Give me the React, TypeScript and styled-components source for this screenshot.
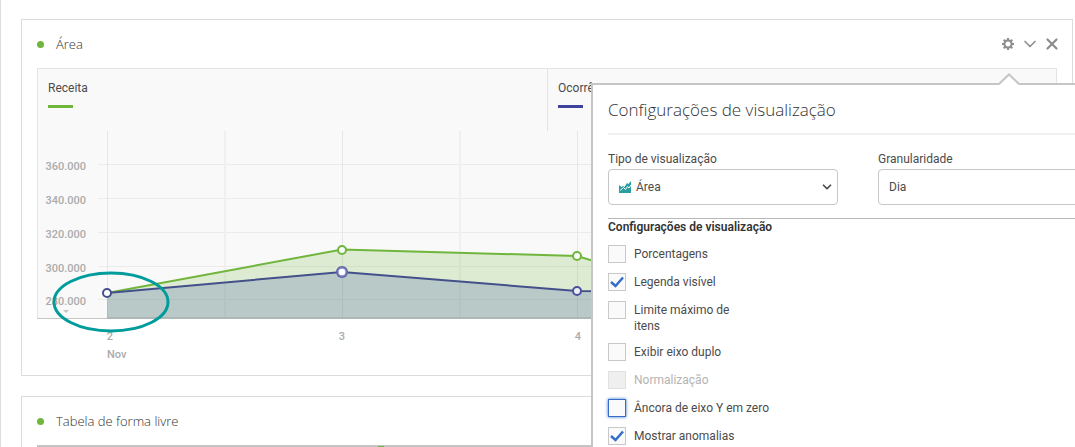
import React, { useId } from 'react';
import styled, { createGlobalStyle } from 'styled-components';
import { ChevronDown, X } from 'lucide-react';

const GlobalStyle = createGlobalStyle`
  *, *::before, *::after { box-sizing: border-box; }
  body {
    margin: 0;
    background: #fff;
    color: #4b4b4b;
    font: 400 12px/16px Roboto, "Liberation Sans", sans-serif;
  }
`;

const Page = styled.main`
  display: flex;
  flex-direction: column;
  gap: 20px;
  height: 100vh;
  overflow: hidden;
  padding: 19px 2px 0 20px;
  border-left: 1px solid #dedede;
`;

const Panel = styled.section`
  flex: none;
  border: 1px solid #dcdcdc;
  padding: 0 15px;
`;

const PanelHeader = styled.header`
  display: flex;
  align-items: center;
  gap: 12px;
  height: 48px;
`;

const Dot = styled.span`
  width: 7px;
  height: 7px;
  border-radius: 50%;
  background: #70b53c;
`;

const PanelTitle = styled.h2`
  flex: 1;
  margin: 0;
  color: #323232;
  font: 300 13px/20px "Open Sans", sans-serif;
`;

const Tools = styled.div`
  display: flex;
  align-items: center;
  gap: 8px;
  margin-right: -2px;
`;

const ToolAnchor = styled.div`
  position: relative;
  display: flex;
`;

const ToolButton = styled.button`
  display: flex;
  align-items: center;
  justify-content: center;
  width: 14px;
  height: 14px;
  padding: 0;
  border: 0;
  background: none;
  color: #8e8e8e;
  cursor: pointer;

  svg { flex: none; }
`;

const Chart = styled.div`
  border: solid #e4e4e4;
  border-width: 1px 1px 0;
  background: #f9f9f9;
  margin-bottom: 56px;
`;

const Legend = styled.div`
  display: grid;
  grid-template-columns: 1fr 1fr;
`;

const LegendItem = styled.div`
  height: 62px;
  padding: 11px 10px 0;

  & + & { border-left: 1px solid #e4e4e4; }
`;

const Swatch = styled.div<{ $color: string }>`
  width: 25px;
  height: 3px;
  margin-top: 9px;
  background: ${(p) => p.$color};
`;

const Plot = styled.svg`
  display: block;
  width: 100%;
  height: 188px;
  overflow: visible;
  font: 500 11px Roboto, sans-serif;
  fill: none;

  text { fill: #ababab; }
`;

const TableFrame = styled.div`
  height: 40px;
  border: 1px solid #c4c4c4;
  border-top-width: 2px;
  background: #f9f9f9;
`;

const TableMark = styled.div`
  position: relative;
  top: -1px;
  width: 6px;
  height: 4px;
  margin-left: 340px;
  background: #70b53c;
`;

const Popover = styled.div`
  position: absolute;
  z-index: 2;
  top: 46px;
  right: -110px;
  width: 534px;
  padding: 15px 15px 24px;
  border: 2px solid #c6c6c6;
  background: #fff;
`;

const Caret = styled.svg`
  position: absolute;
  top: -12px;
  right: 104px;
`;

const PopoverTitle = styled.h3`
  margin: 0;
  padding-bottom: 13px;
  border-bottom: 2px solid #f1f1f1;
  color: #323232;
  font: 300 17px/20px "Open Sans", sans-serif;
`;

const Fields = styled.div`
  display: grid;
  grid-template-columns: 1fr 1fr;
  gap: 40px;
  padding: 16px 0 13px;
  border-bottom: 1px solid #b9b9b9;
`;

const Field = styled.label`
  display: flex;
  flex-direction: column;
  gap: 2px;
`;

const SelectBox = styled.span`
  display: grid;
  align-items: center;

  > * { grid-area: 1 / 1; }
  > svg { pointer-events: none; }
`;

const TypeIcon = styled.svg`
  margin-left: 11px;
`;

const Arrow = styled(ChevronDown)`
  justify-self: end;
  margin-right: 4px;
  color: #4b4b4b;
`;

const Select = styled.select<{ $icon?: boolean }>`
  appearance: none;
  width: 100%;
  height: 36px;
  padding: 0 24px 0 ${(p) => (p.$icon ? 27 : 10)}px;
  border: 1px solid #c6c6c6;
  border-radius: 4px;
  background: #fff;
  color: #4b4b4b;
  font: inherit;
`;

const Options = styled.fieldset`
  display: flex;
  flex-direction: column;
  gap: 10px;
  margin: 0;
  padding: 0;
  border: 0;
`;

const OptionsTitle = styled.legend`
  padding: 0 0 10px;
  color: #323232;
  font-weight: 600;
`;

const Option = styled.label<{ $disabled?: boolean; $narrow?: boolean }>`
  display: flex;
  gap: 8px;
  width: ${(p) => (p.$narrow ? '136px' : 'auto')};
  color: ${(p) => (p.$disabled ? '#b4b4b4' : '#4b4b4b')};
`;

const CheckBox = styled.span`
  display: grid;
  flex: none;
  place-items: center;
  width: 18px;
  height: 18px;

  > * { grid-area: 1 / 1; }
  > svg { pointer-events: none; }
`;

const Check = styled.input<{ $focused?: boolean }>`
  appearance: none;
  width: 18px;
  height: 18px;
  margin: 0;
  border: 1px solid ${(p) => (p.$focused ? '#326ec8' : '#c8c8c8')};
  background: #fafafa;
  box-shadow: ${(p) => (p.$focused ? '0 0 3px #326ec8' : 'none')};

  &:disabled {
    border-color: #e1e1e1;
    background: #efefef;
  }
`;

const OptionText = styled.span`
  padding-top: 1px;
  margin-bottom: -1px;
`;

const GREEN = '#70b53c';
const NAVY = '#43508a';
const GRID_ROWS = [
  { y: 34, label: '360.000' },
  { y: 68, label: '340.000' },
  { y: 102, label: '320.000' },
  { y: 136, label: '300.000' },
  { y: 169, label: '280.000' },
];

function AreaChart() {
  return (
    <Plot role="img" aria-label="Receita e Ocorrências por dia">
      {GRID_ROWS.map((row) => (
        <React.Fragment key={row.label}>
          <rect x="60" y={row.y - 1} width="94%" height="1" fill="#ebebeb" />
          <text x="48" y={row.y + 5} textAnchor="end">{row.label}</text>
        </React.Fragment>
      ))}
      <path d="M25 179h6l-3 3z" fill="#c4c4c4" />
      {[69, 304, 539].map((x) => (
        <rect key={x} x={x} y="0" width="1" height="188" fill="#e6e6e6" />
      ))}
      {[186, 421].map((x) => (
        <rect key={x} x={x} y="0" width="2" height="188" fill="#f0f0f0" />
      ))}
      <path d="M69 162L304 118L539 125L640 155L774 140V188H69z" fill={GREEN} fillOpacity="0.2" />
      <path d="M69 162L304 141L539 160L774 162V188H69z" fill="#5a6eaa" fillOpacity="0.27" />
      <rect x="-1" y="187" width="100%" height="1" fill="#c6c6c6" />
      <path d="M69 187H774" stroke="#9ca6a6" strokeWidth="1" />
      <path d="M69 162L304 118.500L539 125L640 155" stroke={GREEN} strokeWidth="2" />
      <path d="M69 162L304 141L539 160L774 162" stroke={NAVY} strokeWidth="2" />
      <g fill="#fff" strokeWidth="2">
        <circle cx="304" cy="119" r="4" stroke={GREEN} fill="#f8fbf5" />
        <circle cx="539" cy="125" r="4" stroke={GREEN} fill="#f8fbf5" />
        <circle cx="69" cy="162" r="4" stroke={NAVY} />
        <circle cx="304" cy="141" r="6" fill="#5c5fa8" stroke="none" />
        <circle cx="304" cy="141" r="4" fill="#fff" stroke="#8a8dc6" strokeWidth="1.500" />
        <circle cx="539" cy="160" r="4" stroke="#4a50a0" fill="#eceef4" />
      </g>
      <text x="72" y="209" textAnchor="middle">2</text>
      <text x="304" y="209" textAnchor="middle">3</text>
      <text x="540" y="209" textAnchor="middle">4</text>
      <text x="69" y="227">Nov</text>
      <ellipse cx="73" cy="171" rx="57" ry="29" stroke="#009c9c" strokeWidth="3" />
    </Plot>
  );
}

function GearIcon() {
  return (
    <svg width="12" height="12" viewBox="0 0 12 12" fill="none" stroke="currentColor">
      <circle cx="6" cy="6" r="3.500" strokeWidth="2" />
      {[0, 45, 90, 135, 180, 225, 270, 315].map((a) => (
        <path key={a} d="M6 0V2.300" strokeWidth="2.200" transform={`rotate(${a} 6 6)`} />
      ))}
    </svg>
  );
}

interface ToggleProps {
  label: string;
  checked?: boolean;
  disabled?: boolean;
  focused?: boolean;
  narrow?: boolean;
}

function Toggle({ label, checked, disabled, focused, narrow }: ToggleProps) {
  const id = useId();
  return (
    <Option htmlFor={id} $disabled={disabled} $narrow={narrow}>
      <CheckBox>
        <Check id={id} type="checkbox" defaultChecked={checked} disabled={disabled} $focused={focused} />
        {checked && (
          <svg width="14" height="12" viewBox="0 0 14 12" fill="none" stroke="#326ec8" strokeWidth="2.500">
            <path d="M1 6l4.500 4L13 1.500" />
          </svg>
        )}
      </CheckBox>
      <OptionText>{label}</OptionText>
    </Option>
  );
}

function SettingsPopover() {
  return (
    <Popover role="dialog" aria-label="Configurações de visualização">
      <Caret width="20" height="12" viewBox="0 0 20 12">
        <path d="M0 12L10 2L20 12z" fill="#fff" />
        <path d="M0 11L10 1.500L20 11" fill="none" stroke="#c6c6c6" strokeWidth="2" />
      </Caret>
      <PopoverTitle>Configurações de visualização</PopoverTitle>
      <Fields>
        <Field>
          Tipo de visualização
          <SelectBox>
            <Select $icon>
              <option>Área</option>
            </Select>
            <TypeIcon width="13" height="12" viewBox="0 0 13 12">
              <path d="M0 4L2.500 6L4 5L5.500 6L8 2L9.500 3L12 0V12H0z" fill="#2a9d9f" />
              <path d="M1 9.500L4.500 6.500L6.500 8.500L8.500 5.500L10 7L12 4" fill="none" stroke="#fff" strokeWidth="1" />
            </TypeIcon>
            <Arrow size={14} strokeWidth={3} />
          </SelectBox>
        </Field>
        <Field>
          Granularidade
          <SelectBox>
            <Select>
              <option>Dia</option>
            </Select>
            <Arrow size={14} strokeWidth={3} />
          </SelectBox>
        </Field>
      </Fields>
      <Options>
        <OptionsTitle>Configurações de visualização</OptionsTitle>
        <Toggle label="Porcentagens" />
        <Toggle label="Legenda visível" checked />
        <Toggle label="Limite máximo de itens" narrow />
        <Toggle label="Exibir eixo duplo" />
        <Toggle label="Normalização" disabled />
        <Toggle label="Âncora de eixo Y em zero" focused />
        <Toggle label="Mostrar anomalias" checked />
      </Options>
    </Popover>
  );
}

export default function App() {
  return (
    <>
      <GlobalStyle />
      <Page>
        <Panel>
          <PanelHeader>
            <Dot />
            <PanelTitle>Área</PanelTitle>
            <Tools>
              <ToolAnchor>
                <ToolButton type="button" aria-label="Configurações">
                  <GearIcon />
                </ToolButton>
                <SettingsPopover />
              </ToolAnchor>
              <ToolButton type="button" aria-label="Recolher">
                <ChevronDown size={20} strokeWidth={2} />
              </ToolButton>
              <ToolButton type="button" aria-label="Fechar">
                <X size={18} strokeWidth={3} />
              </ToolButton>
            </Tools>
          </PanelHeader>
          <Chart>
            <Legend>
              <LegendItem>
                Receita
                <Swatch $color={GREEN} />
              </LegendItem>
              <LegendItem>
                Ocorrências
                <Swatch $color="#3f439c" />
              </LegendItem>
            </Legend>
            <AreaChart />
          </Chart>
        </Panel>
        <Panel>
          <PanelHeader>
            <Dot />
            <PanelTitle>Tabela de forma livre</PanelTitle>
          </PanelHeader>
          <TableFrame>
            <TableMark />
          </TableFrame>
        </Panel>
      </Page>
    </>
  );
}
